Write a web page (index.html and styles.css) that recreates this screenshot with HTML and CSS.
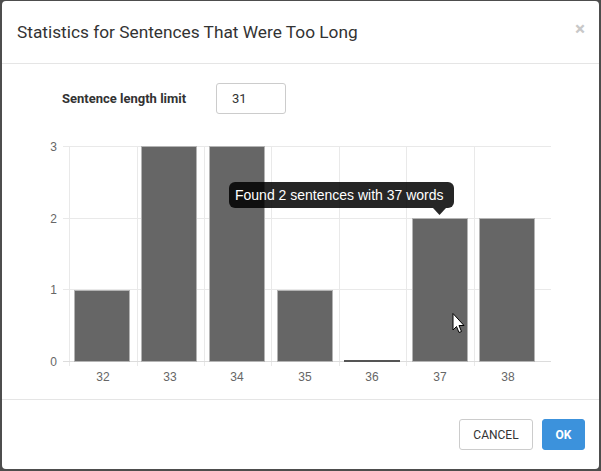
FILE: index.html
```html
<!DOCTYPE html>
<html>
<head>
<meta charset="utf-8">
<link rel="stylesheet" href="styles.css">
</head>
<body>
<div class="dialog">
  <div class="header">
    <h1 class="title">Statistics for Sentences That Were Too Long</h1>
    <span class="close">×</span>
  </div>
  <div class="body">
    <div class="form-row">
      <label class="label">Sentence length limit</label>
      <div class="input">31</div>
    </div>
    <svg class="chart" width="597" height="260" viewBox="2 130 597 260" xmlns="http://www.w3.org/2000/svg">
      <g stroke="#e9e9e9" stroke-width="1">
        <line x1="63" y1="146.5" x2="551" y2="146.5"/>
        <line x1="63" y1="218.5" x2="551" y2="218.5"/>
        <line x1="63" y1="289.5" x2="551" y2="289.5"/>
        <line x1="69.5" y1="146" x2="69.5" y2="366"/>
        <line x1="137.5" y1="146" x2="137.5" y2="366"/>
        <line x1="204.5" y1="146" x2="204.5" y2="366"/>
        <line x1="271.5" y1="146" x2="271.5" y2="366"/>
        <line x1="339.5" y1="146" x2="339.5" y2="366"/>
        <line x1="406.5" y1="146" x2="406.5" y2="366"/>
        <line x1="474.5" y1="146" x2="474.5" y2="366"/>
      </g>
      <line x1="63" y1="361.5" x2="551" y2="361.5" stroke="#dcdcdc"/>
      <g fill="#666666" stroke="#b4b4b4" stroke-width="1">
        <rect x="74.5" y="290.5" width="55" height="71"/>
        <rect x="141.5" y="146.5" width="55" height="215"/>
        <rect x="209.5" y="146.5" width="55" height="215"/>
        <rect x="277.5" y="290.5" width="55" height="71"/>
        <rect x="412.5" y="218.5" width="55" height="143"/>
        <rect x="479.5" y="218.5" width="55" height="143"/>
      </g>
      <line x1="344" y1="361" x2="400" y2="361" stroke="#555" stroke-width="2"/>
      <g class="tick-y" fill="#666" text-anchor="end">
        <text x="57" y="150.5">3</text>
        <text x="57" y="222.5">2</text>
        <text x="57" y="294">1</text>
        <text x="57" y="365.5">0</text>
      </g>
      <g class="tick-x" fill="#666" text-anchor="middle">
        <text x="103" y="381">32</text>
        <text x="170" y="381">33</text>
        <text x="237" y="381">34</text>
        <text x="305" y="381">35</text>
        <text x="372" y="381">36</text>
        <text x="440" y="381">37</text>
        <text x="508" y="381">38</text>
      </g>
      <g class="tooltip">
        <rect x="229" y="182" width="225" height="26" rx="6" fill="rgba(0,0,0,0.85)"/>
        <path d="M433 208 L439.5 215 L446 208 Z" fill="rgba(0,0,0,0.85)"/>
        <text x="235" y="200" fill="#fff">Found 2 sentences with 37 words</text>
      </g>
      <path class="cursor" d="M453 313.5 L453 330 L456.5 326.5 L459 332.5 L461.5 331.5 L459 325.5 L464 325.5 Z" fill="#fff" stroke="#000" stroke-width="1" stroke-linejoin="miter"/>
    </svg>
  </div>
  <div class="footer">
    <button class="btn btn-default">CANCEL</button>
    <button class="btn btn-primary">OK</button>
  </div>
</div>
</body>
</html>
```
FILE: styles.css
```css
html, body {
  margin: 0;
  padding: 0;
}
body {
  background: #4d4d4d;
  width: 601px;
  height: 471px;
  overflow: hidden;
  font-family: Roboto, "Liberation Sans", Arial, sans-serif;
}
.dialog {
  margin: 1px 2px 2px 2px;
  width: 597px;
  height: 468px;
  background: #fff;
  border-radius: 4px;
  display: flex;
  flex-direction: column;
}
.header {
  height: 62px;
  border-bottom: 1px solid #e5e5e5;
  display: flex;
  align-items: center;
  justify-content: space-between;
  padding: 0 14px 0 15px;
}
.title {
  margin: 0;
  font-size: 17.3px;
  font-weight: 400;
  color: #333;
}
.close {
  font-size: 19px;
  font-weight: 700;
  color: #c8c8c8;
  line-height: 1;
  margin-top: -7px;
}
.body {
  padding: 19px 0 9px 0;
  border-bottom: 1px solid #e5e5e5;
}
.form-row {
  display: flex;
  align-items: center;
  padding-left: 60px;
  gap: 16px;
}
.label {
  font-size: 13px;
  font-weight: 700;
  color: #333;
  width: 138px;
}
.input {
  box-sizing: border-box;
  width: 70px;
  height: 31px;
  border: 1px solid #ccc;
  border-radius: 3px;
  font-size: 13px;
  color: #333;
  padding: 0 15px;
  line-height: 29px;
}
.chart {
  display: block;
  margin-top: 16px;
}
.tick-y text, .tick-x text {
  font-family: "Liberation Sans", Arial, sans-serif;
  font-size: 12px;
}
.tooltip text {
  font-family: "Liberation Sans", Arial, sans-serif;
  font-size: 14px;
}
.footer {
  flex: 1;
  display: flex;
  justify-content: flex-end;
  align-items: flex-start;
  padding: 19px 14px 0 0;
  gap: 9px;
}
.btn {
  height: 31px;
  border-radius: 3px;
  font-family: Roboto, "Liberation Sans", Arial, sans-serif;
  font-size: 12px;
  padding: 0;
  cursor: pointer;
}
.btn-default {
  width: 74px;
  background: #fff;
  border: 1px solid #ccc;
  color: #333;
}
.btn-primary {
  width: 43px;
  background: #3c92dc;
  border: 1px solid #3c92dc;
  color: #fff;
  font-weight: 700;
}
```
